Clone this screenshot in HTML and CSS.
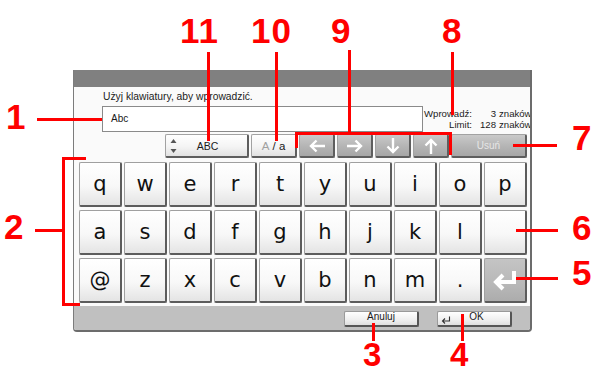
FILE: index.html
```html
<!DOCTYPE html>
<html lang="pl">
<head>
<meta charset="utf-8">
<title>Klawiatura</title>
<link rel="stylesheet" href="styles.css">
</head>
<body>
<div class="stage">
  <div class="panel">
    <div class="titlebar"></div>
    <div class="prompt">Użyj klawiatury, aby wprowadzić.</div>
    <div class="entry">
      <div class="input">Abc</div>
      <div class="info">
        <span class="lbl">Wprowadź:</span><span class="num">3</span><span class="unit">znaków</span>
        <span class="lbl">Limit:</span><span class="num">128</span><span class="unit">znaków</span>
      </div>
    </div>
    <div class="tools">
      <div class="btn light abc">
        <svg class="updown" width="7" height="18" viewBox="0 0 7 18"><path d="M3.5 2 L6.5 6 H0.5 Z M3.5 16 L6.5 12 H0.5 Z" fill="#555"/></svg>
        <span>ABC</span>
      </div>
      <div class="btn light case"><span class="dim">A</span>&nbsp;/&nbsp;a</div>
      <div class="btn gray arrow"><svg width="18" height="14" viewBox="0 0 18 14"><path d="M17 7 H3 M8.5 1.5 L3 7 L8.5 12.5" fill="none" stroke="#fff" stroke-width="2.4"/></svg></div>
      <div class="btn gray arrow"><svg width="18" height="14" viewBox="0 0 18 14"><path d="M1 7 H15 M9.5 1.5 L15 7 L9.5 12.5" fill="none" stroke="#fff" stroke-width="2.4"/></svg></div>
      <div class="btn gray arrow"><svg width="14" height="18" viewBox="0 0 14 18"><path d="M7 1 V15 M1.5 9.5 L7 15 L12.5 9.5" fill="none" stroke="#fff" stroke-width="2.4"/></svg></div>
      <div class="btn gray arrow"><svg width="14" height="18" viewBox="0 0 14 18"><path d="M7 17 V3 M1.5 8.5 L7 3 L12.5 8.5" fill="none" stroke="#fff" stroke-width="2.4"/></svg></div>
      <div class="btn gray del">Usuń</div>
    </div>
    <div class="keys">
      <div class="key">q</div><div class="key">w</div><div class="key">e</div><div class="key">r</div><div class="key">t</div>
      <div class="key">y</div><div class="key">u</div><div class="key">i</div><div class="key">o</div><div class="key">p</div>
      <div class="key">a</div><div class="key">s</div><div class="key">d</div><div class="key">f</div><div class="key">g</div>
      <div class="key">h</div><div class="key">j</div><div class="key">k</div><div class="key">l</div><div class="key"></div>
      <div class="key">@</div><div class="key">z</div><div class="key">x</div><div class="key">c</div><div class="key">v</div>
      <div class="key">b</div><div class="key">n</div><div class="key">m</div><div class="key">.</div>
      <div class="key enter"><svg width="26" height="22" viewBox="0 0 26 22"><path d="M22 2 V13 H5" fill="none" stroke="#fff" stroke-width="4"/><path d="M11 6 L4 13 L11 20" fill="none" stroke="#fff" stroke-width="4"/></svg></div>
    </div>
    <div class="footer">
      <div class="fbtn">Anuluj</div>
      <div class="fbtn ok"><svg class="okicon" width="10" height="8" viewBox="0 0 10 8"><path d="M8.5 0.5 V5 H2 M4 2.5 L1.5 5 L4 7.5" fill="none" stroke="#333" stroke-width="1.1"/></svg><span>OK</span></div>
    </div>
  </div>

  <svg class="marks" width="593" height="374" viewBox="0 0 593 374">
    <g stroke="#ff0000" stroke-width="3" fill="none">
      <path d="M37 119.5 H102"/>
      <path d="M86 158.5 H63.5 V304.5 H80 M35 230.5 H63.5"/>
      <path d="M208.5 52 V141"/>
      <path d="M276.5 52 V141"/>
      <path d="M349.5 50 V133.5 M296.5 148 V133.5 H450.5 V155"/>
      <path d="M452.5 52 V115"/>
      <path d="M513 145.5 H557"/>
      <path d="M516 230.5 H558"/>
      <path d="M516 278.5 H558"/>
      <path d="M373.5 323 V341"/>
      <path d="M462.5 314 V341"/>
    </g>
  </svg>
  <div class="tag t1">1</div>
  <div class="tag t2">2</div>
  <div class="tag t3">3</div>
  <div class="tag t4">4</div>
  <div class="tag t5">5</div>
  <div class="tag t6">6</div>
  <div class="tag t7">7</div>
  <div class="tag t8">8</div>
  <div class="tag t9">9</div>
  <div class="tag t10">10</div>
  <div class="tag t11">11</div>
</div>
</body>
</html>
```

FILE: styles.css
```css
* { box-sizing: border-box; }

body {
  margin: 0;
  background: #fff;
  font-family: "Liberation Sans", Arial, sans-serif;
  color: #1a1a1a;
}

.stage {
  position: relative;
  width: 593px;
  height: 374px;
  overflow: hidden;
  padding: 70px 0 0 73px;
}

.panel {
  width: 459px;
  height: 262px;
  display: flex;
  flex-direction: column;
  background: #fafafa;
  border-left: 1px solid #7c7c7c;
  border-right: 2px solid #6c6c6c;
  border-bottom: 2px solid #6c6c6c;
  border-radius: 0 0 4px 4px;
  overflow: hidden;
}

.titlebar {
  height: 17px;
  background: #808080;
  flex: none;
}

.prompt {
  height: 19px;
  flex: none;
  padding-left: 29px;
  font-size: 10.3px;
  line-height: 19px;
  white-space: nowrap;
}

.entry {
  display: flex;
  height: 26px;
  flex: none;
  padding-left: 28px;
}

.input {
  width: 321px;
  height: 26px;
  border: 1px solid #8a8a8a;
  background: #fff;
  padding-left: 8px;
  font-size: 10px;
  line-height: 24px;
}

.info {
  margin-left: auto;
  display: grid;
  grid-template-columns: 48px 24px 34px;
  grid-auto-rows: 11px;
  padding-top: 2px;
  font-size: 9.6px;
  line-height: 11px;
  white-space: nowrap;
}
.info .lbl, .info .num { text-align: right; }
.info .unit { padding-left: 3px; }

.tools {
  display: flex;
  gap: 2px;
  height: 24px;
  flex: none;
  margin-top: 2px;
  padding-left: 91px;
}

.btn {
  height: 24px;
  display: flex;
  align-items: center;
  justify-content: center;
  border: 1px solid #a2a2a2;
  border-right: 2px solid #5e5e5e;
  border-bottom: 2px solid #5e5e5e;
  border-radius: 2px;
  font-size: 10.5px;
}
.btn.light { background: linear-gradient(#ffffff, #f4f4f4 55%, #e2e2e2); }
.btn.gray { background: linear-gradient(#c9c9c9, #b4b4b4 55%, #a6a6a6); }

.abc { width: 84px; position: relative; }
.abc .updown { position: absolute; left: 4px; top: 2px; }
.abc span { padding-left: 2px; }
.case { width: 46px; font-size: 11.5px; }
.case .dim { color: #a0a0a0; }
.arrow { width: 36px; }
.del { width: 76px; color: #e6e6e6; font-size: 10px; }

.keys {
  display: grid;
  grid-template-columns: repeat(10, 43px);
  grid-auto-rows: 45px;
  column-gap: 2px;
  row-gap: 3px;
  margin-top: 4px;
  padding-left: 5px;
  flex: none;
}

.key {
  display: flex;
  align-items: center;
  justify-content: center;
  border: 1px solid #a0a0a0;
  border-right: 2px solid #5c5c5c;
  border-bottom: 2px solid #5c5c5c;
  border-radius: 2px;
  background: linear-gradient(#ffffff, #f8f8f8 55%, #e4e4e4);
  font-family: "DejaVu Sans", Verdana, sans-serif;
  font-size: 21px;
  color: #111;
}
.key.enter { background: linear-gradient(#c4c4c4, #b8b8b8 60%, #acacac); }

.footer {
  flex: 1;
  margin-top: 3px;
  background: #c0c0c0;
  display: flex;
  gap: 18px;
  padding: 5px 0 0 270px;
}

.fbtn {
  width: 75px;
  height: 16px;
  border: 1px solid #9a9a9a;
  border-right: 2px solid #555;
  border-bottom: 2px solid #555;
  border-radius: 2px;
  background: linear-gradient(#ffffff, #efefef 60%, #dedede);
  font-size: 10px;
  line-height: 9px;
  text-align: center;
}
.fbtn.ok {
  display: flex;
  align-items: flex-start;
}
.fbtn.ok .okicon { margin: 4px 0 0 3px; flex: none; }
.fbtn.ok span { flex: 1; padding-right: 8px; }

.marks {
  position: absolute;
  left: 0;
  top: 0;
  pointer-events: none;
}

.tag {
  position: absolute;
  font: bold 35px/26px "Liberation Sans", Arial, sans-serif;
  color: #ff0000;
  letter-spacing: 1px;
}
.tag.t3, .tag.t4 { font-size: 33px; }
.t1 { left: 6px; top: 103.5px; }
.t2 { left: 4px; top: 213.5px; }
.t3 { left: 363px; top: 342px; }
.t4 { left: 450px; top: 342px; }
.t5 { left: 572px; top: 259.5px; }
.t6 { left: 572px; top: 214.5px; }
.t7 { left: 572px; top: 124.5px; }
.t8 { left: 442px; top: 17.5px; }
.t9 { left: 331px; top: 17.5px; }
.t10 { left: 251px; top: 17.5px; }
.t11 { left: 180px; top: 17.5px; }
```
